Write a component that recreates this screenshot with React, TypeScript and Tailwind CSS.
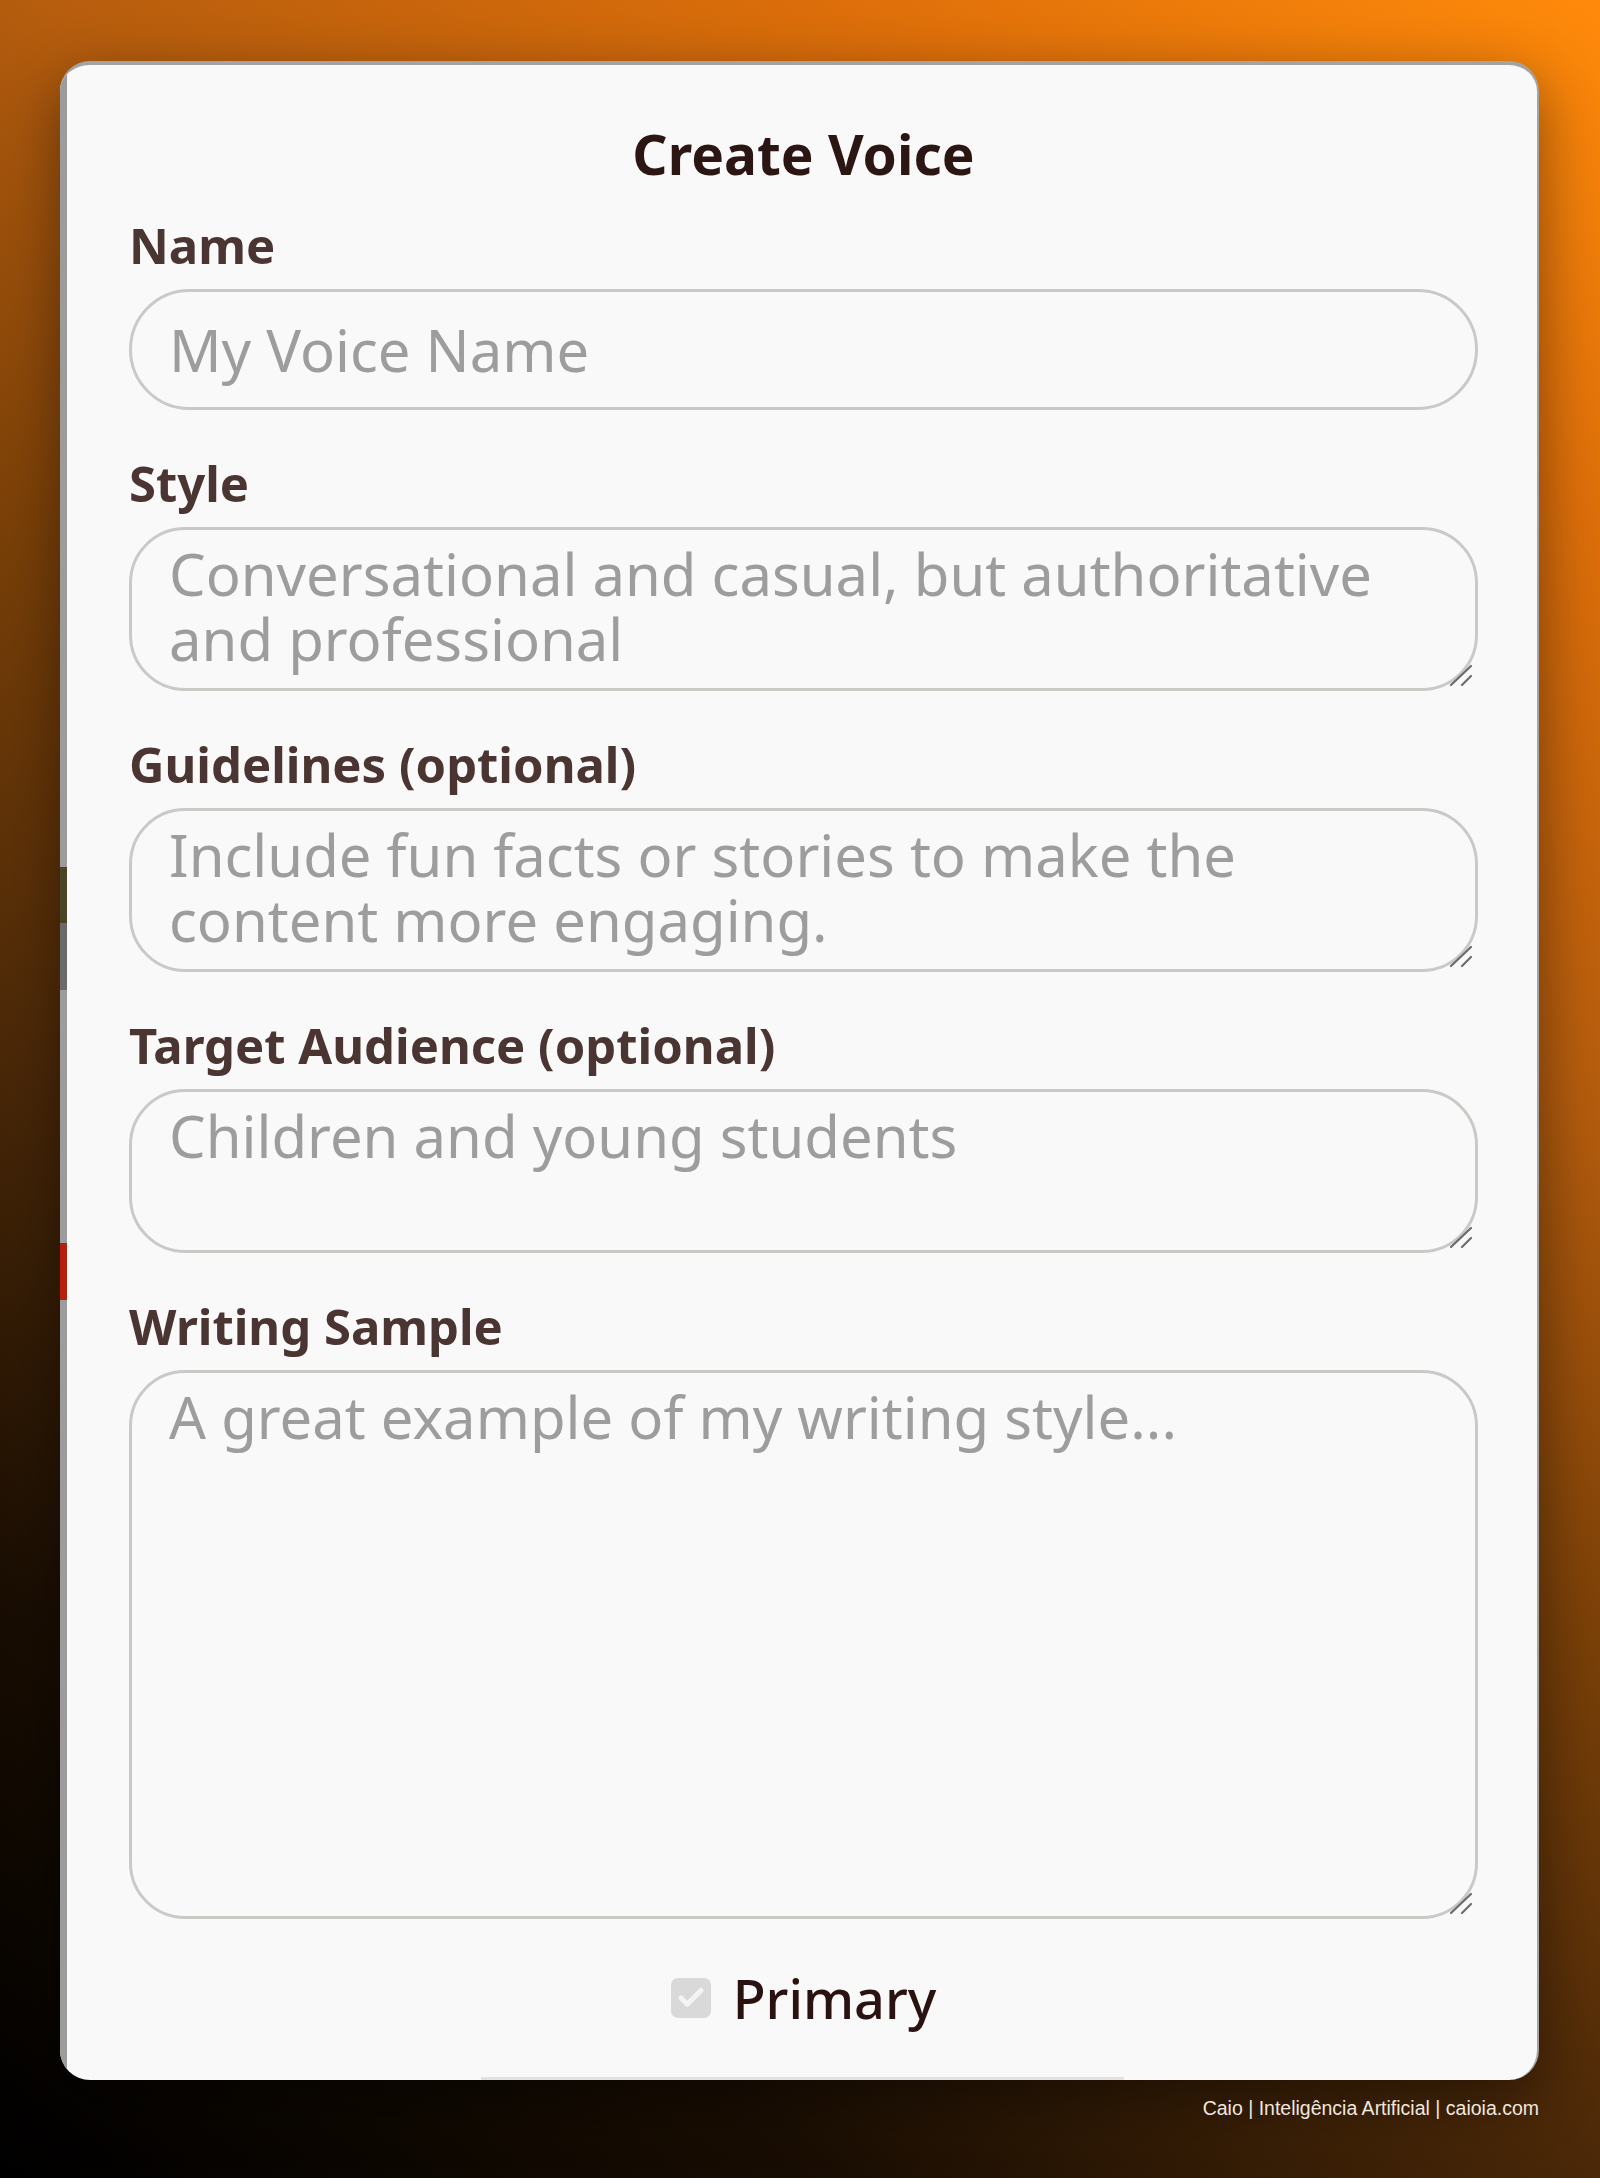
import { Check } from 'lucide-react';

type Field = {
  label: string;
  placeholder: string;
  kind: 'input' | 'area';
  height?: string;
};

const fields: Field[] = [
  { label: 'Name', placeholder: 'My Voice Name', kind: 'input' },
  {
    label: 'Style',
    placeholder: 'Conversational and casual, but authoritative and professional',
    kind: 'area',
    height: 'h-[164px]',
  },
  {
    label: 'Guidelines (optional)',
    placeholder: 'Include fun facts or stories to make the content more engaging.',
    kind: 'area',
    height: 'h-[164px]',
  },
  {
    label: 'Target Audience (optional)',
    placeholder: 'Children and young students',
    kind: 'area',
    height: 'h-[164px]',
  },
  {
    label: 'Writing Sample',
    placeholder: 'A great example of my writing style...',
    kind: 'area',
    height: 'h-[549px]',
  },
];

const font = { fontFamily: '"Noto Sans", "Open Sans", sans-serif' };

function Grip() {
  return (
    <svg
      className="pointer-events-none absolute right-[5px] bottom-[4px]"
      width="24"
      height="24"
      viewBox="0 0 24 24"
      fill="none"
      stroke="#6b6b6b"
      strokeWidth="2.2"
      strokeLinecap="round"
    >
      <path d="M2 22 L22 3" />
      <path d="M13 22 L22 13" />
    </svg>
  );
}

function FormField({ field }: { field: Field }) {
  return (
    <div className="flex flex-col">
      <label className="text-[49px] leading-[60px] font-bold text-[#4b3532] mb-[14px]">
        {field.label}
      </label>
      {field.kind === 'input' ? (
        <input
          placeholder={field.placeholder}
          className="h-[121px] w-full rounded-full border-[3px] border-[#c9c9c5] bg-[#f9f9f9] px-[37px] text-[58px] text-[#3a2a28] placeholder:text-[#9d9d9d] outline-none"
          style={font}
        />
      ) : (
        <div className="relative">
          <textarea
            placeholder={field.placeholder}
            className={`${field.height} block w-full resize-none rounded-[56px] border-[3px] border-[#c9c9c5] bg-[#f9f9f9] pl-[37px] pr-[60px] pt-[11px] pb-[12px] text-[58px] leading-[65px] text-[#3a2a28] placeholder:text-[#9d9d9d] outline-none`}
            style={font}
          />
          <Grip />
        </div>
      )}
    </div>
  );
}

export default function App() {
  return (
    <div
      className="relative min-h-[2178px] w-full overflow-hidden bg-[linear-gradient(35deg,#000000_0%,#1a0e03_18%,#4a2808_34%,#7a4008_50%,#b45c0e_66%,#de6f0a_84%,#ff8a0a_100%)] pt-[61px]"
      style={font}
    >
      {/* modal card */}
      <div className="ml-[60px] flex w-[1479px] overflow-hidden rounded-[30px] border-t-4 border-r-2 border-[#a3a3a3] bg-[#f9f9f9] shadow-[0_20px_60px_rgba(0,0,0,0.45)]">
        {/* edge of the page underneath */}
        <div className="flex w-[7px] shrink-0 flex-col bg-[#9c9c9c]">
          <div className="h-[802px]" />
          <div className="h-[56px] bg-[#4a4526]" />
          <div className="h-[67px] bg-[#6a6a6a]" />
          <div className="h-[253px]" />
          <div className="h-[57px] bg-[#b3200e]" />
          <div className="flex-1" />
        </div>

        <div className="flex flex-1 flex-col">
          <div className="flex flex-col pl-[62px] pr-[59px] pt-[54px]">
            <h1 className="text-center text-[55px] leading-[70px] font-bold text-[#2b1613] mb-[26px]">
              Create Voice
            </h1>
            <div className="flex flex-col gap-[43px]">
              {fields.map((f) => (
                <FormField key={f.label} field={f} />
              ))}
            </div>
            <div className="mt-[51px] mb-[51px] flex items-center justify-center gap-[22px]">
              <div className="flex h-[40px] w-[40px] items-center justify-center rounded-[7px] bg-[#d9d9d9]">
                <Check className="h-[30px] w-[30px] text-[#f4f4f4]" strokeWidth={4} />
              </div>
              <span className="text-[54px] leading-[56px] font-medium text-[#2a1210]">Primary</span>
            </div>
          </div>
          <div className="flex justify-center">
            <div className="h-[3px] w-[643px] bg-[#e4e2dd]" />
          </div>
        </div>
      </div>

      <div className="mt-[17px] flex w-[1539px] justify-end">
        <span
          className="text-[19.5px] leading-[22px] text-[#efe7df]"
          style={{ fontFamily: '"Liberation Sans", Arial, sans-serif' }}
        >
          Caio | Inteligência Artificial | caioia.com
        </span>
      </div>
    </div>
  );
}
